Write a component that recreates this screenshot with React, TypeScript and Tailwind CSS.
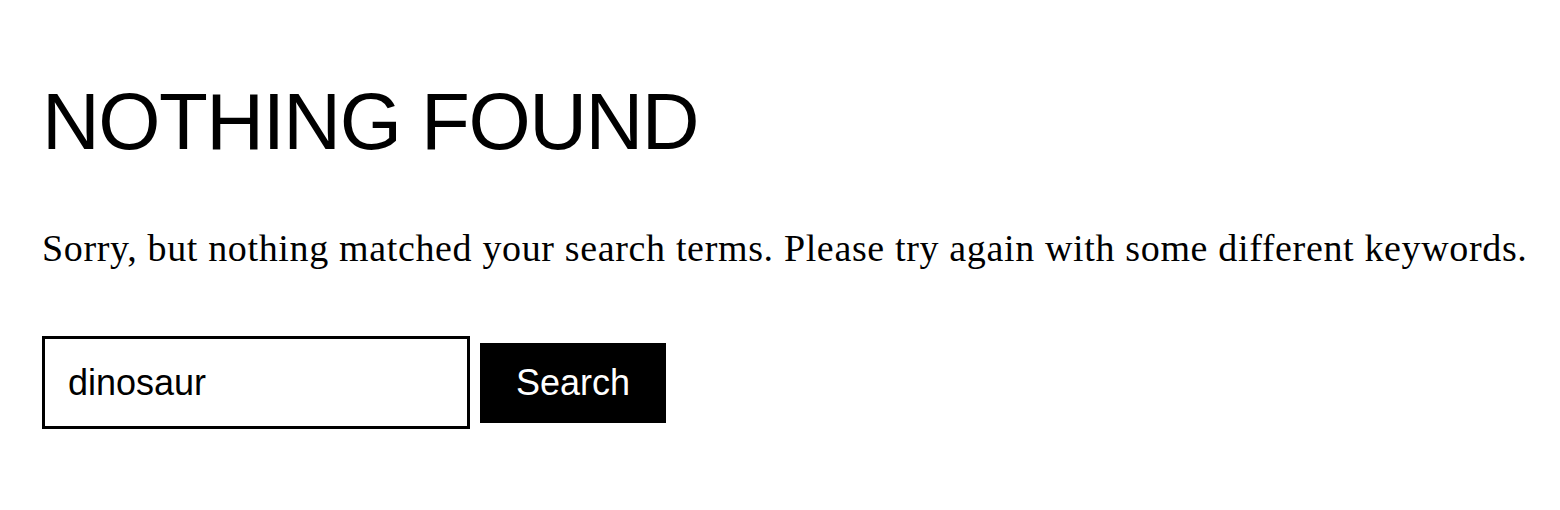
export default function App() {
  return (
    <main className="min-h-[510px] bg-white pl-[42px] pr-[24px] pt-[82px] text-black">
      <h1 className="font-['Liberation_Sans',Arial,sans-serif] text-[80px] leading-none tracking-[-1.5px]">
        NOTHING FOUND
      </h1>
      <p className="mt-[67px] whitespace-nowrap font-['Liberation_Serif','Times_New_Roman',serif] text-[38px] leading-none tracking-[0.65px]">
        Sorry, but nothing matched your search terms. Please try again with some different keywords.
      </p>
      <form className="mt-[69px] flex items-center gap-[10px]" onSubmit={(e) => e.preventDefault()}>
        <input
          type="search"
          defaultValue="dinosaur"
          className="h-[93px] w-[428px] border-[3px] border-black px-[23px] font-['Liberation_Sans',Arial,sans-serif] text-[36px] text-black outline-none"
        />
        <button
          type="submit"
          className="h-[80px] w-[186px] bg-black font-['Liberation_Sans',Arial,sans-serif] text-[36px] text-white"
        >
          Search
        </button>
      </form>
    </main>
  );
}
